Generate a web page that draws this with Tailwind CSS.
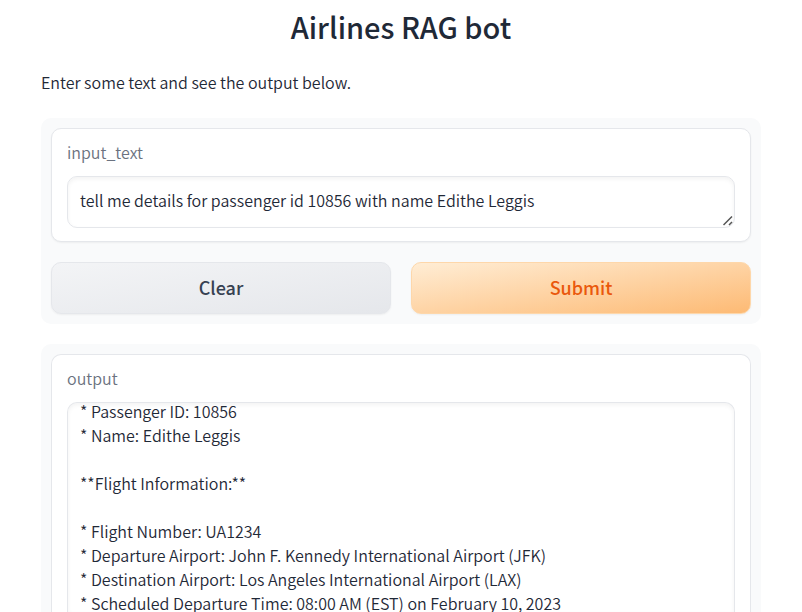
<!DOCTYPE html>
<html lang="en">
<head>
<meta charset="utf-8">
<meta name="viewport" content="width=device-width, initial-scale=1">
<title>Airlines RAG bot</title>
<script src="https://cdn.jsdelivr.net/npm/@tailwindcss/browser@4"></script>
</head>
<body class="h-screen overflow-hidden bg-white text-[16px] leading-[24px] font-[350] text-[#1f2937] font-['Source_Sans_Pro','Noto_Sans_CJK_SC',sans-serif]">
<main class="flex h-full flex-col px-[41px] pt-[6px]">
  <h1 class="text-center text-[29px] leading-[40px] font-medium">Airlines RAG bot</h1>
  <p class="mt-6">Enter some text and see the output below.</p>
  <form class="mt-6 flex flex-col gap-5 rounded-[10px] bg-[#f9fafb] p-[10px]">
    <div class="flex flex-col rounded-[10px] border border-[#e5e7eb] bg-white px-[15px] pt-[11px] pb-[13px] shadow-[0_1px_2px_rgba(0,0,0,0.05)]">
      <label for="input" class="mb-3 text-[#6b7280]">input_text</label>
      <div class="relative">
        <textarea id="input" rows="1" class="block w-full resize-y overflow-hidden rounded-[10px] border border-[#e5e7eb] px-3 pt-[11px] pb-[15px] shadow-[inset_0_2px_4px_rgba(0,0,0,0.05)] outline-none [&::-webkit-resizer]:hidden">tell me details for passenger id 10856 with name Edithe Leggis</textarea>
        <svg class="pointer-events-none absolute right-[2px] bottom-[2px]" width="10" height="10" viewBox="0 0 10 10" fill="none" stroke="#555" stroke-width="1.5" aria-hidden="true"><path d="M.5 9 9 .5M6 9 9 6"/></svg>
      </div>
    </div>
    <div class="grid grid-cols-2 gap-5">
      <button type="reset" class="h-[52px] rounded-[10px] border border-[#e5e7eb] bg-[linear-gradient(to_bottom_right,#f3f4f6,#e5e7eb)] pb-[2px] text-[18px] font-medium text-[#374151] shadow-[0_1px_2px_rgba(0,0,0,0.05)]">Clear</button>
      <button type="button" class="h-[52px] rounded-[10px] border border-[#fed7aa] bg-[linear-gradient(to_bottom_right,#ffedd5,#fdba74)] pb-[2px] text-[18px] font-medium text-[#ea580c] shadow-[0_1px_2px_rgba(0,0,0,0.05)]">Submit</button>
    </div>
  </form>
  <section class="mt-5 flex min-h-0 flex-1 flex-col rounded-t-[10px] bg-[#f9fafb] px-[10px] pt-[10px]">
    <div class="flex min-h-0 flex-1 flex-col rounded-t-[10px] border border-b-0 border-[#e5e7eb] bg-white px-[15px] pt-[11px]">
      <label for="output" class="mb-3 text-[#6b7280]">output</label>
      <textarea id="output" readonly class="block min-h-0 w-full flex-1 resize-none overflow-y-auto rounded-t-[10px] border border-b-0 border-[#e5e7eb] px-3 py-3 shadow-[inset_0_2px_4px_rgba(0,0,0,0.05)] outline-none [scrollbar-width:none]">* Passenger ID: 10856
* Name: Edithe Leggis

**Flight Information:**

* Flight Number: UA1234
* Departure Airport: John F. Kennedy International Airport (JFK)
* Destination Airport: Los Angeles International Airport (LAX)
* Scheduled Departure Time: 08:00 AM (EST) on February 10, 2023</textarea>
    </div>
  </section>
</main>
<script>
  // Keep the first result line at the top edge of the output box.
  document.getElementById('output').scrollTop = 16;
</script>
</body>
</html>
